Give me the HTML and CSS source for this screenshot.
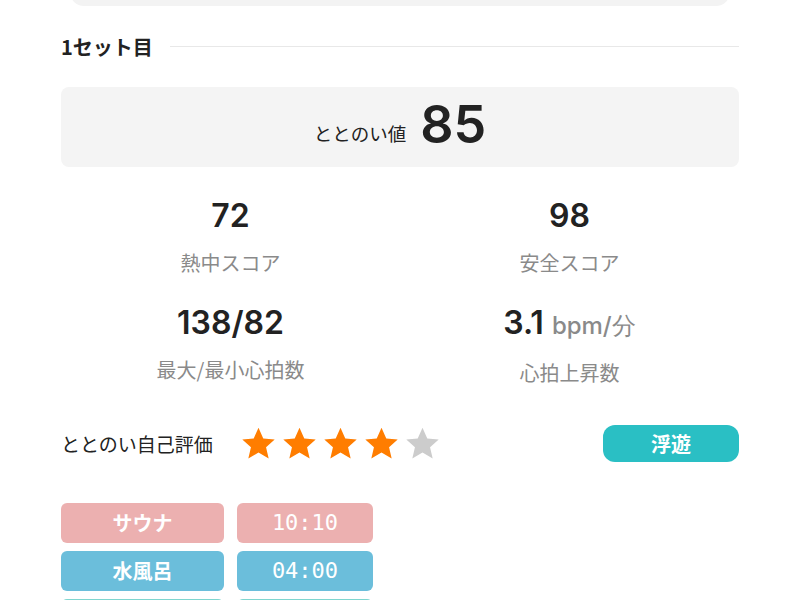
FILE: index.html
```html
<!DOCTYPE html>
<html lang="ja">
<head>
    <meta charset="UTF-8">
    <meta name="viewport" content="width=device-width, initial-scale=1.0">
    <title>セット詳細</title>
    <link rel="stylesheet" href="styles.css">
</head>
<body>
    <div class="top-card"></div>
    <div class="page">
        <div class="set-head">
            <span class="set-title">1セット目</span>
            <span class="set-line"></span>
        </div>

        <div class="score-box">
            <span class="score-label">ととのい値</span>
            <span class="score-value">85</span>
        </div>

        <div class="stats">
            <div class="stat">
                <div class="stat-value">72</div>
                <div class="stat-label">熱中スコア</div>
            </div>
            <div class="stat">
                <div class="stat-value">98</div>
                <div class="stat-label">安全スコア</div>
            </div>
            <div class="stat">
                <div class="stat-value">138/82</div>
                <div class="stat-label">最大/最小心拍数</div>
            </div>
            <div class="stat">
                <div class="stat-value">3.1 <span class="unit">bpm/分</span></div>
                <div class="stat-label">心拍上昇数</div>
            </div>
        </div>

        <div class="rating">
            <span class="rating-label">ととのい自己評価</span>
            <div class="stars">
                <svg class="star on" viewBox="0 0 24 24"><path d="M12 1.8l3.1 6.9 7.4.7-5.6 5 1.7 7.4L12 17.9l-6.6 3.9 1.7-7.4-5.6-5 7.4-.7z"/></svg>
                <svg class="star on" viewBox="0 0 24 24"><path d="M12 1.8l3.1 6.9 7.4.7-5.6 5 1.7 7.4L12 17.9l-6.6 3.9 1.7-7.4-5.6-5 7.4-.7z"/></svg>
                <svg class="star on" viewBox="0 0 24 24"><path d="M12 1.8l3.1 6.9 7.4.7-5.6 5 1.7 7.4L12 17.9l-6.6 3.9 1.7-7.4-5.6-5 7.4-.7z"/></svg>
                <svg class="star on" viewBox="0 0 24 24"><path d="M12 1.8l3.1 6.9 7.4.7-5.6 5 1.7 7.4L12 17.9l-6.6 3.9 1.7-7.4-5.6-5 7.4-.7z"/></svg>
                <svg class="star" viewBox="0 0 24 24"><path d="M12 1.8l3.1 6.9 7.4.7-5.6 5 1.7 7.4L12 17.9l-6.6 3.9 1.7-7.4-5.6-5 7.4-.7z"/></svg>
            </div>
            <span class="mood">浮遊</span>
        </div>

        <div class="steps">
            <div class="tag sauna">サウナ</div>
            <div class="tag sauna time">10:10</div>
            <div class="tag water">水風呂</div>
            <div class="tag water time">04:00</div>
            <div class="tag rest"></div>
            <div class="tag rest time"></div>
        </div>
    </div>
</body>
</html>
```
FILE: styles.css
```css
body {
    margin: 0;
    background: #fff;
    color: #222;
    font-family: "Noto Sans CJK JP", "Noto Sans", sans-serif;
    height: 600px;
    overflow: hidden;
}
.top-card {
    margin: -20px 70px 0;
    height: 26px;
    background: #f3f3f3;
    border-radius: 0 0 14px 14px;
}
.page {
    padding: 0 61px;
}
.set-head {
    display: flex;
    align-items: center;
    gap: 17px;
    margin-top: 26px;
    height: 30px;
}
.set-title {
    font-size: 20px;
    font-weight: bold;
    line-height: 30px;
}
.set-line {
    flex: 1;
    height: 1px;
    background: #e8e8e8;
    margin-top: -2px;
}
.score-box {
    margin-top: 25px;
    height: 80px;
    background: #f4f4f4;
    border-radius: 8px;
    display: flex;
    justify-content: center;
    align-items: center;
    gap: 14px;
}
.score-label {
    font-size: 18.5px;
    margin-top: 12px;
}
.score-value {
    font-family: "Inter", "Noto Sans", sans-serif;
    font-size: 52px;
    font-weight: 600;
    line-height: 60px;
    margin-top: -4px;
}
.stats {
    display: grid;
    grid-template-columns: 1fr 1fr;
    row-gap: 26px;
    margin-top: 29px;
    text-align: center;
}
.stat-value {
    font-family: "Inter", "Noto Sans", sans-serif;
    font-size: 32px;
    font-weight: 600;
    line-height: 40px;
}
.unit {
    font-size: 24px;
    font-weight: 500;
    color: #8a8a8a;
}
.stat-label {
    font-size: 20px;
    color: #8a8a8a;
    line-height: 28px;
    margin-top: 13px;
}
.rating {
    display: flex;
    align-items: center;
    margin-top: 36px;
    height: 40px;
}
.rating-label {
    font-size: 19px;
    width: 179px;
}
.stars {
    display: flex;
    gap: 4px;
}
.star {
    width: 37px;
    height: 37px;
    fill: #cccccc;
}
.star.on {
    fill: #ff7d00;
}
.mood {
    margin-left: auto;
    width: 136px;
    height: 37px;
    line-height: 37px;
    text-align: center;
    background: #2abfc4;
    color: #fff;
    font-size: 20px;
    font-weight: bold;
    border-radius: 12px;
}
.steps {
    display: grid;
    grid-template-columns: 163px 136px;
    column-gap: 13px;
    row-gap: 8px;
    margin-top: 40px;
}
.tag {
    height: 40px;
    line-height: 40px;
    border-radius: 6px;
    color: #fff;
    text-align: center;
    font-size: 20px;
    font-weight: bold;
}
.time {
    font-family: "DejaVu Sans Mono", monospace;
    font-weight: normal;
    font-size: 22px;
}
.sauna {
    background: #ecb0b0;
}
.water {
    background: #6bbedb;
}
.rest {
    background: #7fd6cf;
}
```
